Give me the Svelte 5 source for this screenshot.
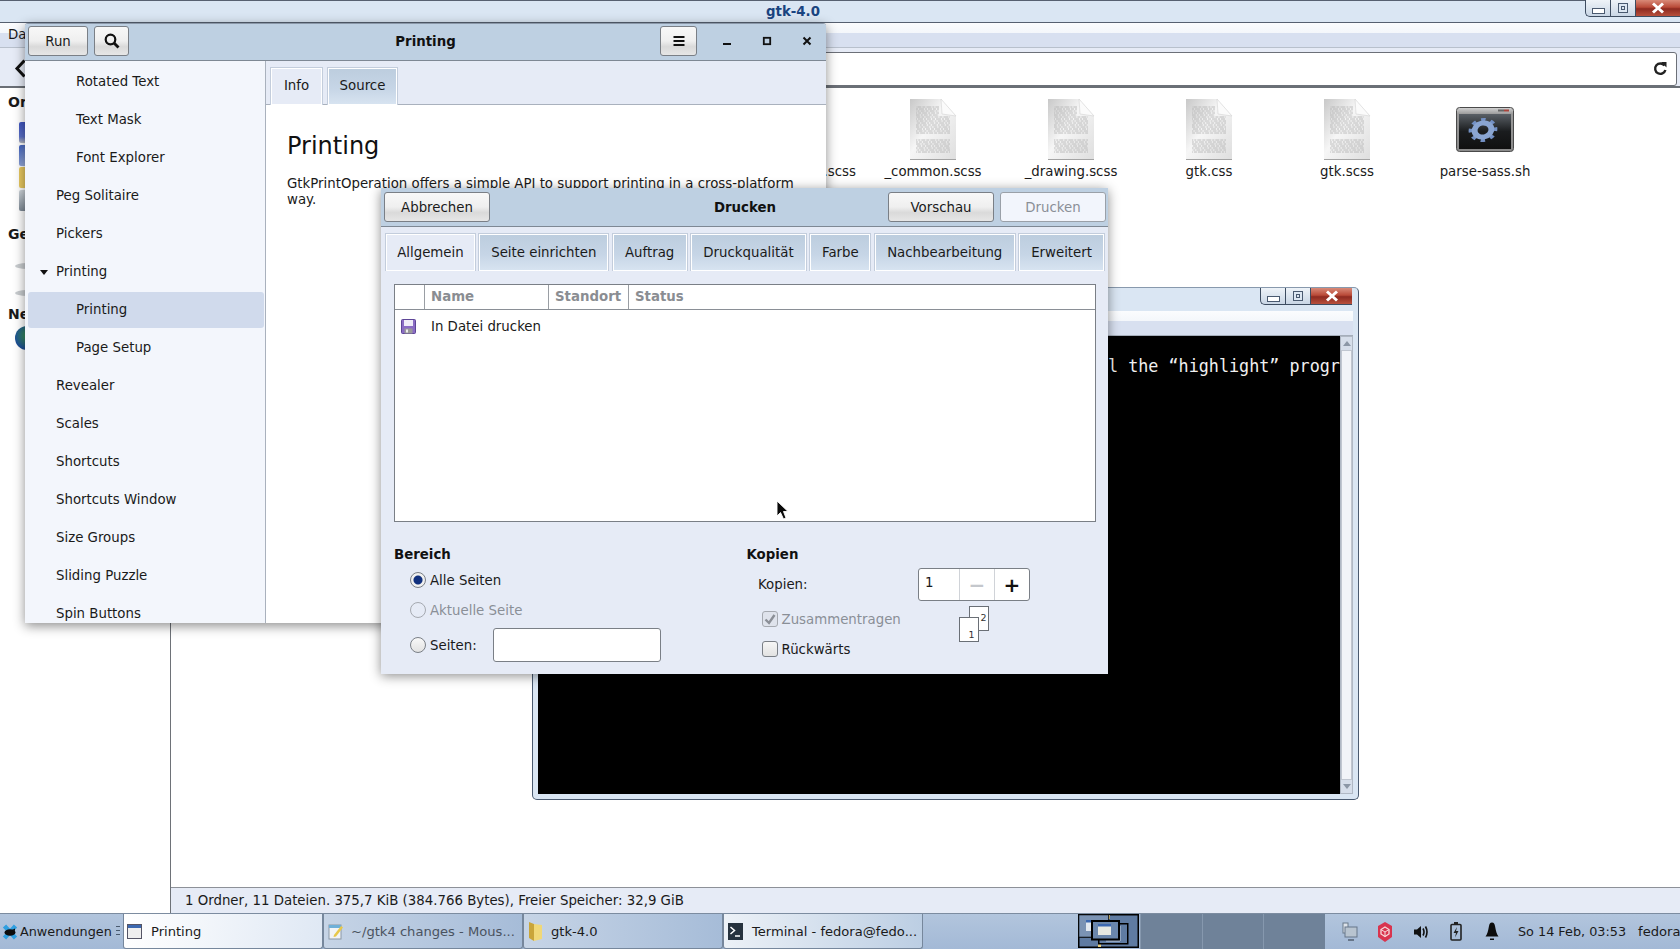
<script>
  const treeRows = [
    { label: 'Rotated Text', level: 1 },
    { label: 'Text Mask', level: 1 },
    { label: 'Font Explorer', level: 1 },
    { label: 'Peg Solitaire', level: 0 },
    { label: 'Pickers', level: 0 },
    { label: 'Printing', level: 0, open: true },
    { label: 'Printing', level: 1, selected: true },
    { label: 'Page Setup', level: 1 },
    { label: 'Revealer', level: 0 },
    { label: 'Scales', level: 0 },
    { label: 'Shortcuts', level: 0 },
    { label: 'Shortcuts Window', level: 0 },
    { label: 'Size Groups', level: 0 },
    { label: 'Sliding Puzzle', level: 0 },
    { label: 'Spin Buttons', level: 0 }
  ];

  const dialogTabs = [
    { label: 'Allgemein', w: 91, active: true },
    { label: 'Seite einrichten', w: 131 },
    { label: 'Auftrag', w: 76 },
    { label: 'Druckqualität', w: 117 },
    { label: 'Farbe', w: 62 },
    { label: 'Nachbearbeitung', w: 142 },
    { label: 'Erweitert', w: 87 }
  ];

  const files = ['_common.scss', '_drawing.scss', 'gtk.css', 'gtk.scss'];

  const docLines = [];
  for (let y = 8; y < 36; y += 2) docLines.push(y);
  for (let y = 41; y < 55; y += 2) docLines.push(y);
</script>

{#snippet winButtons()}
  <div class="wm-buttons">
    <span class="wm-btn wm-min"><i></i></span>
    <span class="wm-btn wm-max"><i></i></span>
    <span class="wm-btn wm-close">
      <svg width="16" height="12" viewBox="0 0 16 12"><path d="M3 1.5 L13 10.5 M13 1.5 L3 10.5" stroke="#fff" stroke-width="3"/></svg>
    </span>
  </div>
{/snippet}

{#snippet docIcon()}
  <svg width="48" height="62" viewBox="0 0 48 62">
    <defs>
      <linearGradient id="docfill" x1="0" y1="0" x2="1" y2="0.9">
        <stop offset="0" stop-color="#c8c8c8"/>
        <stop offset="0.45" stop-color="#f6f6f6"/>
        <stop offset="1" stop-color="#e0e0e0"/>
      </linearGradient>
    </defs>
    <path d="M1 0 H32 L47 17 V61 H1 Z" fill="url(#docfill)"/>
    <path d="M1 60.5 H47" stroke="#a4a4a4" stroke-width="1.2"/>
    <path d="M32 0 L33 15 L47 17 Z" fill="#fbfbfb" stroke="#d4d4d4" stroke-width="0.6"/>
    {#each docLines as y}
      <path d={`M7 ${y} H${y < 18 ? 30 : 41}`} stroke="#b0b0b0" stroke-width="0.8" stroke-dasharray="3 1 5 1 2 1 4 1" stroke-dashoffset={y * 3.7}/>
    {/each}
  </svg>
{/snippet}

<div class="desktop">
  <!-- file manager behind everything -->
  <div class="fm">
    <header class="fm-title">
      <span>gtk-4.0</span>
      {@render winButtons()}
    </header>
    <div class="fm-menu"><span>Datei</span></div>
    <div class="fm-toolbar">
      <svg class="chev" width="13" height="19" viewBox="0 0 13 19"><path d="M10.5 1.5 L3 9.5 L10.5 17.5" fill="none" stroke="#111" stroke-width="3"/></svg>
      <div class="fm-entry">
        <svg width="16" height="16" viewBox="0 0 16 16"><path d="M12.5 4.5 A5.2 5.2 0 1 0 13.4 9" fill="none" stroke="#222" stroke-width="2.4"/><path d="M9 1 L14.5 1 L14.5 6.5 Z" fill="#222"/></svg>
      </div>
    </div>
    <div class="fm-main">
      <aside class="fm-side">
        <b class="s1">Orte</b>
        <div class="places">
          <i class="pl blue"></i><i class="pl home"></i><i class="pl folder"></i><i class="pl trash"></i>
        </div>
        <b class="s2">Geräte</b>
        <div class="disks"><i></i><i></i></div>
        <b class="s3">Netzwerk</b>
        <i class="globe"></i>
      </aside>
      <div class="fm-view">
        <div class="fm-files">
          <div class="file partial"><span class="fname">.scss</span></div>
          {#each files as f}
            <div class="file">
              {@render docIcon()}
              <span class="fname">{f}</span>
            </div>
          {/each}
          <div class="file">
            <div class="script-wrap">
              <svg width="58" height="45" viewBox="0 0 58 45">
                <defs>
                  <linearGradient id="frame" x1="0" y1="0" x2="0" y2="1">
                    <stop offset="0" stop-color="#d4d4d4"/><stop offset="0.15" stop-color="#9a9a9a"/><stop offset="1" stop-color="#8a8a8a"/>
                  </linearGradient>
                  <linearGradient id="screen" x1="0" y1="0" x2="0" y2="1">
                    <stop offset="0" stop-color="#5a6066"/><stop offset="0.5" stop-color="#1a1c1e"/><stop offset="1" stop-color="#101010"/>
                  </linearGradient>
                </defs>
                <rect x="0.5" y="0.5" width="57" height="44" rx="3" fill="url(#frame)" stroke="#4a4a4a"/>
                <rect x="3" y="7" width="52" height="35" fill="url(#screen)"/>
                <rect x="42" y="2.5" width="6" height="2" fill="#666"/>
                <rect x="48" y="2.5" width="5" height="2" fill="#a8443c"/>
                <g transform="translate(27 23) rotate(-12) scale(1 0.82)">
                  <circle r="12.5" fill="none" stroke="#7390c4" stroke-width="4" stroke-dasharray="4.4 5.4"/>
                  <circle r="8.5" fill="none" stroke="#8aa5d2" stroke-width="6"/>
                </g>
              </svg>
            </div>
            <span class="fname">parse-sass.sh</span>
          </div>
        </div>
        <footer class="fm-status">1 Ordner, 11 Dateien. 375,7 KiB (384.766 Bytes), Freier Speicher: 32,9 GiB</footer>
      </div>
    </div>
  </div>

  <!-- terminal -->
  <section class="term">
    <header class="term-title">{@render winButtons()}</header>
    <div class="term-menu"></div>
    <div class="term-body">
      <pre class="term-text">l the “highlight” progr</pre>
      <div class="term-scroll">
        <span class="arrow up"></span>
        <span class="thumb"></span>
        <span class="arrow down"></span>
      </div>
    </div>
  </section>

  <!-- gtk4 demo window -->
  <section class="demo">
    <header class="headerbar">
      <div class="hb-left">
        <button class="btn run">Run</button>
        <button class="btn icon-btn">
          <svg width="18" height="18" viewBox="0 0 18 18"><circle cx="7.5" cy="7.5" r="4.8" fill="none" stroke="#111" stroke-width="2.2"/><path d="M11 11 L15.5 15.5" stroke="#111" stroke-width="2.8"/></svg>
        </button>
      </div>
      <b class="hb-title">Printing</b>
      <div class="hb-right">
        <button class="btn icon-btn menu-btn">
          <svg width="14" height="12" viewBox="0 0 14 12"><path d="M1.5 2 H12.5 M1.5 6 H12.5 M1.5 10 H12.5" stroke="#111" stroke-width="2"/></svg>
        </button>
        <span class="ctl"><svg width="10" height="10" viewBox="0 0 10 10"><path d="M1 8 H9" stroke="#111" stroke-width="2"/></svg></span>
        <span class="ctl"><svg width="10" height="10" viewBox="0 0 10 10"><rect x="1.8" y="1.8" width="6.4" height="6.4" fill="none" stroke="#111" stroke-width="1.8"/></svg></span>
        <span class="ctl"><svg width="10" height="10" viewBox="0 0 10 10"><path d="M1.5 1.5 L8.5 8.5 M8.5 1.5 L1.5 8.5" stroke="#111" stroke-width="2"/></svg></span>
      </div>
    </header>
    <div class="demo-main">
      <nav class="demo-list">
        {#each treeRows as row}
          <div class="demo-row" class:child={row.level === 1} class:selected={row.selected}>
            {#if row.open}<i class="expander"></i>{/if}
            {row.label}
          </div>
        {/each}
      </nav>
      <div class="demo-pane">
        <div class="demo-tabs">
          <span class="dtab active">Info</span>
          <span class="dtab">Source</span>
        </div>
        <article class="demo-info">
          <h1>Printing</h1>
          <p>GtkPrintOperation offers a simple API to support printing in a cross-platform way.</p>
        </article>
      </div>
    </div>
  </section>

  <!-- print dialog -->
  <section class="dialog">
    <header class="dlg-head">
      <div><button class="btn dlg-btn abbr">Abbrechen</button></div>
      <b>Drucken</b>
      <div class="dlg-actions">
        <button class="btn dlg-btn vor">Vorschau</button>
        <button class="btn dlg-btn print" disabled>Drucken</button>
      </div>
    </header>
    <div class="dlg-tabs">
      {#each dialogTabs as t}
        <span class="dlgtab" class:active={t.active} style:width="{t.w}px">{t.label}</span>
      {/each}
    </div>
    <div class="dlg-body">
      <div class="printers">
        <div class="pr-head">
          <span class="c0"></span>
          <span class="c1">Name</span>
          <span class="c2">Standort</span>
          <span class="c3">Status</span>
        </div>
        <div class="pr-row">
          <svg width="15" height="15" viewBox="0 0 15 15">
            <rect x="0.5" y="0.5" width="14" height="14" rx="1" fill="#8a6cc4" stroke="#5d4596"/>
            <rect x="3" y="1" width="9" height="6" fill="#efecf8"/>
            <rect x="3.5" y="9.5" width="8" height="5" fill="#9a9a9a"/>
            <rect x="5" y="10.5" width="2" height="3" fill="#eee"/>
          </svg>
          <span>In Datei drucken</span>
        </div>
      </div>
      <div class="dlg-options">
        <div class="range">
          <b>Bereich</b>
          <label class="radio-row"><i class="radio on"></i>Alle Seiten</label>
          <label class="radio-row off"><i class="radio"></i>Aktuelle Seite</label>
          <label class="radio-row"><i class="radio"></i>Seiten:<span class="pages-entry"></span></label>
        </div>
        <div class="copies">
          <b>Kopien</b>
          <div class="copies-row">
            <span class="copies-label">Kopien:</span>
            <div class="spin">
              <span class="spin-val">1</span>
              <span class="spin-btn dim">−</span>
              <span class="spin-btn">+</span>
            </div>
          </div>
          <div class="copies-bottom">
            <div class="checks">
              <label class="check-row off">
                <i class="check">
                  <svg width="14" height="14" viewBox="0 0 14 14"><path d="M2.5 7.5 L6 11 L11.5 3" fill="none" stroke="#8b8f97" stroke-width="2.4"/></svg>
                </i>Zusammentragen
              </label>
              <label class="check-row"><i class="check"></i>Rückwärts</label>
            </div>
            <div class="collate">
              <span class="page p2">2</span>
              <span class="page p1">1</span>
            </div>
          </div>
        </div>
      </div>
    </div>
  </section>

  <!-- task bar -->
  <footer class="panel">
    <div class="apps">
      <svg width="18" height="18" viewBox="0 0 18 18">
        <path d="M3.5 3 L14.5 15 M14.5 3 L3.5 15" stroke="#2f9fe0" stroke-width="4.4"/>
        <ellipse cx="9" cy="9.5" rx="5.5" ry="3.2" fill="#0c0c0c"/>
        <path d="M11 7 L14 5.5 L14 8 Z" fill="#0c0c0c"/>
      </svg>
      <span>Anwendungen</span>
      <i class="grip"></i>
    </div>
    <div class="task active">
      <svg width="15" height="15" viewBox="0 0 15 15"><rect x="0.5" y="0.5" width="14" height="14" fill="#eee" stroke="#556"/><rect x="1" y="1" width="13" height="3" fill="#3c68b0"/></svg>
      <span>Printing</span>
    </div>
    <div class="task tight">
      <svg width="16" height="17" viewBox="0 0 16 17"><rect x="1" y="2" width="12" height="14" fill="#f2f4f6" stroke="#8a97a6"/><rect x="1" y="2" width="12" height="3" fill="#6fb0d8"/><path d="M6 12 L13 3 L15 4.5 L8 13.5 L5.5 14 Z" fill="#e8c84a"/></svg>
      <span class="dimtask">~/gtk4 changes - Mous...</span>
    </div>
    <div class="task tight">
      <svg width="16" height="20" viewBox="0 0 16 20"><path d="M1 1 L6 3 V20 L1 17 Z" fill="#c9a53a"/><path d="M6 3 L14 4 V18 L6 20 Z" fill="#f0d878"/></svg>
      <span>gtk-4.0</span>
    </div>
    <div class="task">
      <svg width="15" height="17" viewBox="0 0 15 17"><rect width="15" height="17" fill="#26323e"/><path d="M2.5 4 L6.5 7.5 L2.5 11" fill="none" stroke="#fff" stroke-width="1.5"/><path d="M7 13 H12" stroke="#fff" stroke-width="1.5"/></svg>
      <span>Terminal - fedora@fedo...</span>
    </div>
    <div class="panel-gap"></div>
    <div class="pager">
      <div class="wksp current">
        <svg width="61" height="35" viewBox="0 0 61 35">
          <rect x="0.75" y="0.75" width="59.5" height="32.5" fill="#5f7ba2" stroke="#000" stroke-width="1.5"/>
          <rect x="29" y="1" width="3" height="4" fill="#e8d080"/>
          <rect x="20" y="30" width="3" height="3" fill="#e8d080"/>
          <rect x="0.75" y="0.75" width="30" height="22.5" fill="#7b93b4" stroke="#000" stroke-width="1"/>
          <rect x="8" y="6" width="6" height="11" fill="#e2e8f0"/>
          <rect x="8" y="6" width="6" height="2.5" fill="#3c68b0"/>
          <rect x="20.75" y="9.75" width="29" height="20" fill="#5f7ba2" stroke="#000" stroke-width="1.5"/>
          <path d="M42 12 V27 H28" fill="none" stroke="#c8d2e0"/>
          <rect x="14" y="7" width="27" height="18.5" fill="#6a86ac" stroke="#000" stroke-width="2"/>
          <rect x="20" y="10" width="13" height="11" fill="#e6e8e2"/>
          <rect x="20" y="10" width="13" height="2.5" fill="#3c68b0"/>
        </svg>
      </div>
      <div class="wksp"></div>
      <div class="wksp"></div>
      <div class="wksp"></div>
    </div>
    <div class="tray">
      <span class="ti"><svg width="16" height="20" viewBox="0 0 16 20"><rect x="1" y="1" width="5" height="10" fill="#dde3ea" stroke="#6a7a8a"/><rect x="3" y="5" width="12" height="10" fill="#b8c4d0" stroke="#67768a"/><path d="M6 18 H12" stroke="#67768a" stroke-width="2"/></svg></span>
      <span class="ti"><svg width="16" height="22" viewBox="0 0 16 22"><path d="M8 1 L15 5 V16 L8 21 L1 16 V5 Z" fill="#d9344e"/><path d="M8 6 L12 8.5 V13 L8 15.5 L4 13 V8.5 Z" fill="none" stroke="#f6dada" stroke-width="1.3"/><path d="M4 8.5 L8 11 L12 8.5 M8 11 V15.5" fill="none" stroke="#f6dada"/></svg></span>
      <span class="ti"><svg width="16" height="16" viewBox="0 0 16 16"><path d="M1 5.5 H4 L8 2 V14 L4 10.5 H1 Z" fill="#111"/><path d="M10 4.5 Q12 8 10 11.5 M12.5 2.5 Q15.5 8 12.5 13.5" fill="none" stroke="#111" stroke-width="1.6"/></svg></span>
      <span class="ti"><svg width="12" height="19" viewBox="0 0 12 19"><rect x="1" y="2.5" width="10" height="15.5" rx="1" fill="none" stroke="#222" stroke-width="1.6"/><rect x="4" y="0" width="4" height="2.5" fill="#222"/><path d="M7 5 L3.5 11 H6 L5 15.5 L8.5 9 H6 Z" fill="#222"/></svg></span>
      <span class="ti"><svg width="14" height="19" viewBox="0 0 14 19"><path d="M7 0.5 C9 0.5 9.5 2 10 4 C11 9 11.5 12 13.5 14.5 H0.5 C2.5 12 3 9 4 4 C4.5 2 5 0.5 7 0.5 Z" fill="#0c0c0c"/><path d="M5 16.5 H9 V18 H5 Z" fill="#0c0c0c"/></svg></span>
      <span class="clock">So 14 Feb, 03:53</span>
      <span class="user">fedora</span>
    </div>
  </footer>

  <svg class="cursor" width="13" height="20" viewBox="0 0 13 20">
    <path d="M1 1 V16 L4.5 12.5 L7.5 19 L10 18 L7.5 11.5 L12 11.5 Z" fill="#0a0a0a" stroke="#fff" stroke-width="0.9"/>
  </svg>
</div>

<style>
  :global(body) {
    margin: 0;
    overflow: hidden;
  }

  .desktop {
    position: relative;
    width: 1680px;
    height: 949px;
    overflow: hidden;
    background: #fff;
    display: flex;
    flex-direction: column;
    font-family: "DejaVu Sans", sans-serif;
    font-size: 13.33px;
    color: #1a1a1a;
  }

  i {
    display: block;
  }

  /* file manager */

  .fm {
    flex: 1;
    min-height: 0;
    display: flex;
    flex-direction: column;
  }

  .fm-title {
    position: relative;
    height: 23px;
    flex: none;
    box-sizing: border-box;
    background: #dae6f3;
    border-top: 1px solid #566070;
    border-bottom: 1px solid #566070;
    display: flex;
    align-items: center;
    justify-content: center;
    padding-right: 94px;
    font-weight: 700;
    color: #1a4480;
  }

  .wm-buttons {
    position: absolute;
    top: -1px;
    right: 0;
    height: 17px;
    display: flex;
    box-sizing: border-box;
    border: 1px solid #3d4c60;
    border-top: 0;
    border-right: 0;
    border-radius: 0 0 0 5px;
    overflow: hidden;
    background: linear-gradient(#eef3f8, #c9d6e5);
  }

  .wm-btn {
    width: 24px;
    display: flex;
    align-items: center;
    justify-content: center;
    border-right: 1px solid #3d4c60;
  }

  .wm-min i {
    width: 11px;
    height: 4px;
    margin-top: 5px;
    border: 1px solid #4a5a70;
    background: #fff;
  }

  .wm-max i {
    width: 8px;
    height: 8px;
    border: 1px solid #4a5a70;
    box-shadow: inset 0 0 0 2px #dde7f2, inset 0 0 0 3px #4a5a70;
  }

  .wm-close {
    width: 44px;
    border-right: 0;
    background: linear-gradient(#d98a78 0, #b94a38 45%, #8e2a20 55%, #b8503c 100%);
  }

  .fm-menu {
    height: 25px;
    flex: none;
    box-sizing: border-box;
    background: linear-gradient(#fbfcfe 0, #f4f7fb 40%, #d8e0f0 42%, #d8e0f0 100%);
    border-bottom: 1px solid #b8c0cc;
    padding-left: 8px;
    line-height: 24px;
  }

  .fm-toolbar {
    height: 40px;
    flex: none;
    box-sizing: border-box;
    background: #e6ebf6;
    border-bottom: 2px solid #6a6f76;
    display: flex;
    align-items: center;
    padding: 4px 3px 0 14px;
    gap: 10px;
  }

  .chev {
    flex: none;
    margin-top: -2px;
  }

  .fm-entry {
    flex: 1;
    height: 34px;
    box-sizing: border-box;
    background: #fff;
    border: 1px solid #6c7078;
    border-radius: 3px;
    display: flex;
    align-items: center;
    justify-content: flex-end;
    padding-right: 8px;
  }

  .fm-main {
    flex: 1;
    min-height: 0;
    display: flex;
  }

  .fm-side {
    width: 171px;
    flex: none;
    box-sizing: border-box;
    border-right: 1px solid #6e7278;
    padding-left: 8px;
    position: relative;
    font-size: 14px;
    line-height: 16px;
  }

  .s1 { display: block; margin-top: 6px; }
  .s2 { display: block; margin-top: 15px; }
  .s3 { display: block; margin-top: 10px; }

  .places {
    margin: 12px 0 0 11px;
    display: flex;
    flex-direction: column;
    gap: 1.5px;
  }

  .pl {
    width: 24px;
    height: 21px;
    border-radius: 2px;
  }

  .pl.blue { background: linear-gradient(#3f55c0 0, #5a70c8 70%, #b4b8c0 100%); }
  .pl.home { background: linear-gradient(135deg, #3f62c0, #dde4ee); }
  .pl.folder { background: linear-gradient(90deg, #e8c860 40%, #3f62c0 70%); }
  .pl.trash { background: linear-gradient(#cfd6dc, #7e8a96); }

  .disks {
    margin: 21px 0 0 7px;
    display: flex;
    flex-direction: column;
    gap: 21px;
  }

  .disks i {
    width: 24px;
    height: 6px;
    border-radius: 50%;
    background: #c8cccf;
  }

  .globe {
    margin: 4px 0 0 7px;
    width: 24px;
    height: 24px;
    border-radius: 50%;
    background: radial-gradient(circle at 55% 40%, #3f9e4a, #1c4f96 70%, #102a50);
  }

  .fm-view {
    flex: 1;
    min-width: 0;
    display: flex;
    flex-direction: column;
  }

  .fm-files {
    flex: 1;
    display: flex;
    padding: 11px 0 0 604px;
  }

  .file {
    width: 138px;
    height: 81px;
    display: flex;
    flex-direction: column;
    align-items: center;
    justify-content: flex-end;
    gap: 3px;
  }

  .file.partial {
    width: 86px;
    margin: 0 8px 0 -5px;
    align-items: flex-end;
  }

  .script-wrap {
    height: 62px;
    display: flex;
    align-items: flex-start;
    padding-top: 8px;
    box-sizing: border-box;
  }

  .fname {
    white-space: nowrap;
    line-height: 16px;
  }

  .fm-status {
    height: 26px;
    flex: none;
    box-sizing: border-box;
    background: #e6ebf6;
    border-top: 1px solid #8d9198;
    padding-left: 14px;
    line-height: 25px;
  }

  /* terminal */

  .term {
    position: absolute;
    left: 532px;
    top: 287px;
    width: 827px;
    height: 513px;
    box-sizing: border-box;
    background: #dae6f3;
    border: 1px solid #4a5a70;
    border-top-color: #8899ad;
    border-radius: 0 5px 5px 5px;
    display: flex;
    flex-direction: column;
    padding: 0 5px 5px;
  }

  .term-title {
    position: relative;
    height: 23px;
    flex: none;
    margin: 0 -1px;
  }

  .term .wm-buttons {
    top: 0;
    right: 2px;
  }

  .term .wm-close {
    width: 41px;
  }

  .term-menu {
    height: 24px;
    flex: none;
    background: linear-gradient(#fbfcfe 0, #f4f7fb 40%, #d8e0f0 42%, #d8e0f0 100%);
    border-bottom: 1px solid #a5aeba;
  }

  .term-body {
    flex: 1;
    min-height: 0;
    background: #000;
    display: flex;
  }

  .term-text {
    flex: 1;
    margin: 0;
    padding: 19px 0 0 570px;
    color: #f0f0f0;
    font-family: "DejaVu Sans Mono", monospace;
    font-size: 16.75px;
    line-height: 22px;
    overflow: hidden;
  }

  .term-scroll {
    width: 13px;
    flex: none;
    display: flex;
    flex-direction: column;
    background: #e4e9f2;
    border: 1px solid #b0b8c4;
    box-sizing: border-box;
  }

  .thumb {
    flex: 1;
    background: #f2f4f8;
    border: 1px solid #c0c6d0;
  }

  .arrow {
    height: 13px;
    flex: none;
    position: relative;
    background: #d6deea;
  }

  .arrow::after {
    content: "";
    position: absolute;
    left: 2px;
    top: 4px;
    border: 4px solid transparent;
    border-top: 0;
    border-bottom: 5px solid #8c97a6;
  }

  .arrow.down::after {
    border-bottom: 0;
    border-top: 5px solid #8c97a6;
  }

  /* gtk4 demo */

  .demo {
    position: absolute;
    left: 25px;
    top: 23px;
    width: 801px;
    height: 600px;
    display: flex;
    flex-direction: column;
    background: #f3f6fc;
    border-top: 1px solid #8a97a8;
    box-sizing: border-box;
    overflow: hidden;
    border-radius: 3px 3px 0 0;
    box-shadow: 0 3px 12px rgba(0, 0, 0, 0.45);
  }

  .headerbar {
    height: 37px;
    flex: none;
    box-sizing: border-box;
    background: #bed0e2;
    border-bottom: 1px solid #7e8894;
    display: grid;
    grid-template-columns: 1fr auto 1fr;
    align-items: center;
    padding: 0 3px 2px;
    font-size: 13.33px;
    color: #111;
  }

  .hb-left {
    display: flex;
    gap: 6px;
  }

  .hb-right {
    display: flex;
    align-items: center;
    justify-content: flex-end;
    margin-right: -4px;
  }

  .btn {
    font: inherit;
    color: #1a1a1a;
    height: 30px;
    padding: 0;
    box-sizing: border-box;
    border: 1px solid #7a7f86;
    border-radius: 3px;
    background: linear-gradient(#f8f8f8 0, #efefef 50%, #dadada 70%, #e6e6e6 100%);
    display: inline-flex;
    align-items: center;
    justify-content: center;
  }

  .run {
    width: 60px;
  }

  .icon-btn {
    width: 35px;
  }

  .menu-btn {
    margin-right: 10px;
    width: 37px;
  }

  .ctl {
    width: 40px;
    display: flex;
    justify-content: center;
  }

  .demo-main {
    flex: 1;
    min-height: 0;
    display: flex;
  }

  .demo-list {
    width: 241px;
    flex: none;
    box-sizing: border-box;
    padding: 2.5px 1px 0 3px;
    border-right: 1px solid #a9b1bd;
    overflow: hidden;
  }

  .demo-row {
    height: 36px;
    margin-bottom: 2px;
    padding-left: 28px;
    display: flex;
    align-items: center;
    border-radius: 3px;
    position: relative;
    white-space: nowrap;
  }

  .demo-row.child {
    padding-left: 48px;
  }

  .demo-row.selected {
    background: #d0daec;
  }

  .expander {
    position: absolute;
    left: 12px;
    top: 16px;
    border: 4.5px solid transparent;
    border-bottom: 0;
    border-top: 5px solid #111;
  }

  .demo-pane {
    flex: 1;
    display: flex;
    flex-direction: column;
    min-width: 0;
  }

  .demo-tabs {
    height: 44px;
    flex: none;
    box-sizing: border-box;
    display: flex;
    align-items: flex-end;
    padding-left: 4px;
    gap: 4px;
    background: #e6ebf6;
    border-bottom: 1px solid #a9b1bd;
  }

  .dtab {
    height: 38px;
    padding-bottom: 3px;
    box-sizing: border-box;
    display: flex;
    align-items: center;
    justify-content: center;
    border: 1px solid #c3cddc;
    border-bottom: 0;
    box-shadow: inset 0 0 0 1px #fff;
    background: linear-gradient(#bccdde 0, #c6d5e6 55%, #d8e4f1 100%);
    width: 71px;
    margin-bottom: -1px;
  }

  .dtab.active {
    width: 53px;
    background: #e6ebf6;
  }

  .demo-info {
    flex: 1;
    background: #fff;
    padding: 0 21px;
  }

  .demo-info h1 {
    margin: 25px 0 0;
    font-size: 24px;
    line-height: 32px;
    font-weight: 400;
    color: #111;
  }

  .demo-info p {
    margin: 14px 0 0;
    line-height: 16px;
    width: 519px;
  }

  /* print dialog */

  .dialog {
    position: absolute;
    left: 381px;
    top: 188px;
    width: 727px;
    height: 486px;
    display: flex;
    flex-direction: column;
    background: #e6ebf6;
    box-sizing: border-box;
    border-radius: 3px 3px 0 0;
    box-shadow: 0 2px 12px rgba(0, 0, 0, 0.45);
  }

  .dlg-head {
    height: 39px;
    flex: none;
    box-sizing: border-box;
    background: #bed0e2;
    border-bottom: 1px solid #7e8894;
    display: grid;
    grid-template-columns: 1fr auto 1fr;
    align-items: center;
    padding: 0 2px 0 3px;
    color: #111;
  }

  .dlg-actions {
    display: flex;
    justify-content: flex-end;
    gap: 6px;
  }

  .abbr { width: 106px; }
  .vor { width: 106px; }
  .print {
    width: 106px;
    background: #f2f5fc;
    color: #8a8f97;
    border-color: #9aa0a8;
  }

  .dlg-tabs {
    flex: none;
    display: flex;
    gap: 2.5px;
    padding: 6px 3px 0 4px;
    align-items: flex-end;
    box-sizing: border-box;
    height: 44px;
  }

  .dlgtab {
    height: 38px;
    box-sizing: border-box;
    display: flex;
    align-items: center;
    justify-content: center;
    border: 1px solid #c3cddc;
    border-bottom: 0;
    box-shadow: inset 0 0 0 1px #fff;
    background: linear-gradient(#bccdde 0, #c6d5e6 55%, #d8e4f1 100%);
    white-space: nowrap;
  }

  .dlgtab.active {
    background: #e6ebf6;
  }

  .dlg-body {
    flex: 1;
    min-height: 0;
    padding: 13px 12px 0 13px;
    box-sizing: border-box;
  }

  .printers {
    height: 238px;
    box-sizing: border-box;
    background: #fff;
    border: 1px solid #7a7f86;
  }

  .pr-head {
    height: 25px;
    box-sizing: border-box;
    display: flex;
    border-bottom: 1px solid #8a8f96;
    font-weight: 700;
    color: #8a8d92;
  }

  .pr-head span {
    box-sizing: border-box;
    border-right: 1px solid #9a9ea4;
    padding-left: 6px;
    line-height: 23px;
    white-space: nowrap;
  }

  .pr-head .c0 { width: 30px; }
  .pr-head .c1 { width: 124px; }
  .pr-head .c2 { width: 80px; }
  .pr-head .c3 { flex: 1; border-right: 0; }

  .pr-row {
    height: 32px;
    display: flex;
    align-items: center;
    padding-left: 6px;
    gap: 15px;
  }

  .dlg-options {
    display: grid;
    grid-template-columns: 352.5px 1fr;
    margin-top: 24.5px;
  }

  .dlg-options b {
    display: block;
    height: 16px;
    line-height: 16px;
    color: #111;
  }

  .radio-row {
    height: 30px;
    display: flex;
    align-items: center;
    gap: 4px;
    padding-left: 16px;
  }

  .radio-row:first-of-type {
    margin-top: 2.5px;
  }

  .radio-row:last-child {
    height: 40px;
  }

  .radio-row.off {
    color: #8a8f97;
  }

  .radio {
    width: 16px;
    height: 16px;
    box-sizing: border-box;
    border: 1px solid #7a7f86;
    border-radius: 50%;
    background: linear-gradient(#f8f8f8, #e2e2e2);
    flex: none;
  }

  .radio.on {
    background: radial-gradient(circle, #10307e 0, #10307e 4px, #f0f0f0 5px);
  }

  .off .radio {
    border-color: #a5a9b0;
    background: #e6ebf6;
  }

  .pages-entry {
    width: 168px;
    height: 34px;
    box-sizing: border-box;
    margin-left: 12px;
    background: #fff;
    border: 1px solid #7a7f86;
    border-radius: 3px;
  }

  .copies-row {
    display: flex;
    align-items: center;
    height: 33px;
    margin-top: 5.5px;
    padding-left: 11.5px;
  }

  .copies-label {
    width: 160px;
  }

  .spin {
    width: 112px;
    height: 33px;
    box-sizing: border-box;
    display: flex;
    background: #fff;
    border: 1px solid #7a7f86;
    border-radius: 3px;
  }

  .spin-val {
    flex: 1;
    padding-left: 6px;
    line-height: 28px;
  }

  .spin-btn {
    width: 35px;
    flex: none;
    box-sizing: border-box;
    border-left: 1px solid #d0d3d8;
    display: flex;
    align-items: center;
    justify-content: center;
    font-size: 20px;
    font-weight: 700;
    color: #111;
  }

  .spin-btn.dim {
    color: #c4c7cc;
  }

  .copies-bottom {
    display: flex;
    margin-top: 3px;
  }

  .checks {
    width: 212px;
    padding-left: 15px;
    box-sizing: border-box;
  }

  .check-row {
    height: 30px;
    display: flex;
    align-items: center;
    gap: 4px;
  }

  .check-row.off {
    color: #8a8f97;
  }

  .check {
    width: 16px;
    height: 16px;
    flex: none;
    box-sizing: border-box;
    border: 1px solid #7a7f86;
    border-radius: 3px;
    background: linear-gradient(#f6f6f6, #e2e2e2);
    display: flex;
    align-items: center;
    justify-content: center;
  }

  .off .check {
    border-color: #a5a9b0;
    background: #dfe3ec;
  }

  .collate {
    position: relative;
    width: 30px;
    height: 40px;
  }

  .page {
    position: absolute;
    width: 20px;
    height: 25px;
    box-sizing: border-box;
    background: #fff;
    border: 1px solid #6a6f76;
    font-size: 9.5px;
    line-height: 11px;
    display: flex;
    align-items: flex-end;
    justify-content: flex-end;
    padding: 0 1px 1px 0;
    color: #333;
  }

  .p2 { left: 10px; top: 2px; padding-bottom: 7px; }
  .p1 { left: 0; top: 13px; padding-right: 3px; }

  /* task bar */

  .panel {
    height: 36px;
    flex: none;
    box-sizing: border-box;
    background: linear-gradient(#b2c5dd, #a3b9d6);
    border-top: 1px solid #7c8ca0;
    display: flex;
    align-items: stretch;
    position: relative;
    z-index: 2;
    white-space: nowrap;
    font-size: 13.1px;
  }

  .apps {
    width: 123px;
    flex: none;
    display: flex;
    align-items: center;
    padding-left: 1px;
    gap: 1px;
    box-sizing: border-box;
    font-size: 12.8px;
  }

  .grip {
    width: 4px;
    height: 11px;
    margin-left: 3px;
    background: repeating-linear-gradient(#4a5a6e 0 1px, transparent 1px 4px);
  }

  .task {
    width: 200px;
    flex: none;
    box-sizing: border-box;
    display: flex;
    align-items: center;
    gap: 9px;
    padding-left: 4px;
    overflow: hidden;
    border: 1px solid #76879c;
    border-top: 0;
    border-radius: 0 0 3px 3px;
    background: linear-gradient(90deg, #c6d4e6, #a6bcd8);
  }

  .task.tight {
    gap: 7px;
  }

  .task.active {
    background: linear-gradient(100deg, #fff, #dfe8f4);
    padding-left: 3px;
  }

  .task:nth-child(5) {
    background: linear-gradient(90deg, #ecf1f7, #bccee3);
  }

  .dimtask {
    color: #4a5360;
  }

  .panel-gap {
    flex: 1;
  }

  .pager {
    width: 247px;
    flex: none;
    display: flex;
  }

  .wksp {
    width: 62px;
    background: #6f8299;
    border-left: 1px solid #8698ae;
    box-sizing: border-box;
  }

  .wksp.current {
    border: 0;
    background: #a3b9d6;
  }

  .wksp svg {
    display: block;
  }

  .tray {
    width: 355px;
    flex: none;
    box-sizing: border-box;
    display: flex;
    align-items: center;
    padding-left: 7px;
    overflow: hidden;
  }

  .ti {
    width: 35.5px;
    flex: none;
    display: flex;
    justify-content: center;
  }

  .clock {
    margin-left: 8.5px;
    font-size: 12.8px;
  }

  .user {
    margin-left: 12px;
  }

  .cursor {
    position: absolute;
    left: 776px;
    top: 500px;
    z-index: 5;
  }
</style>
